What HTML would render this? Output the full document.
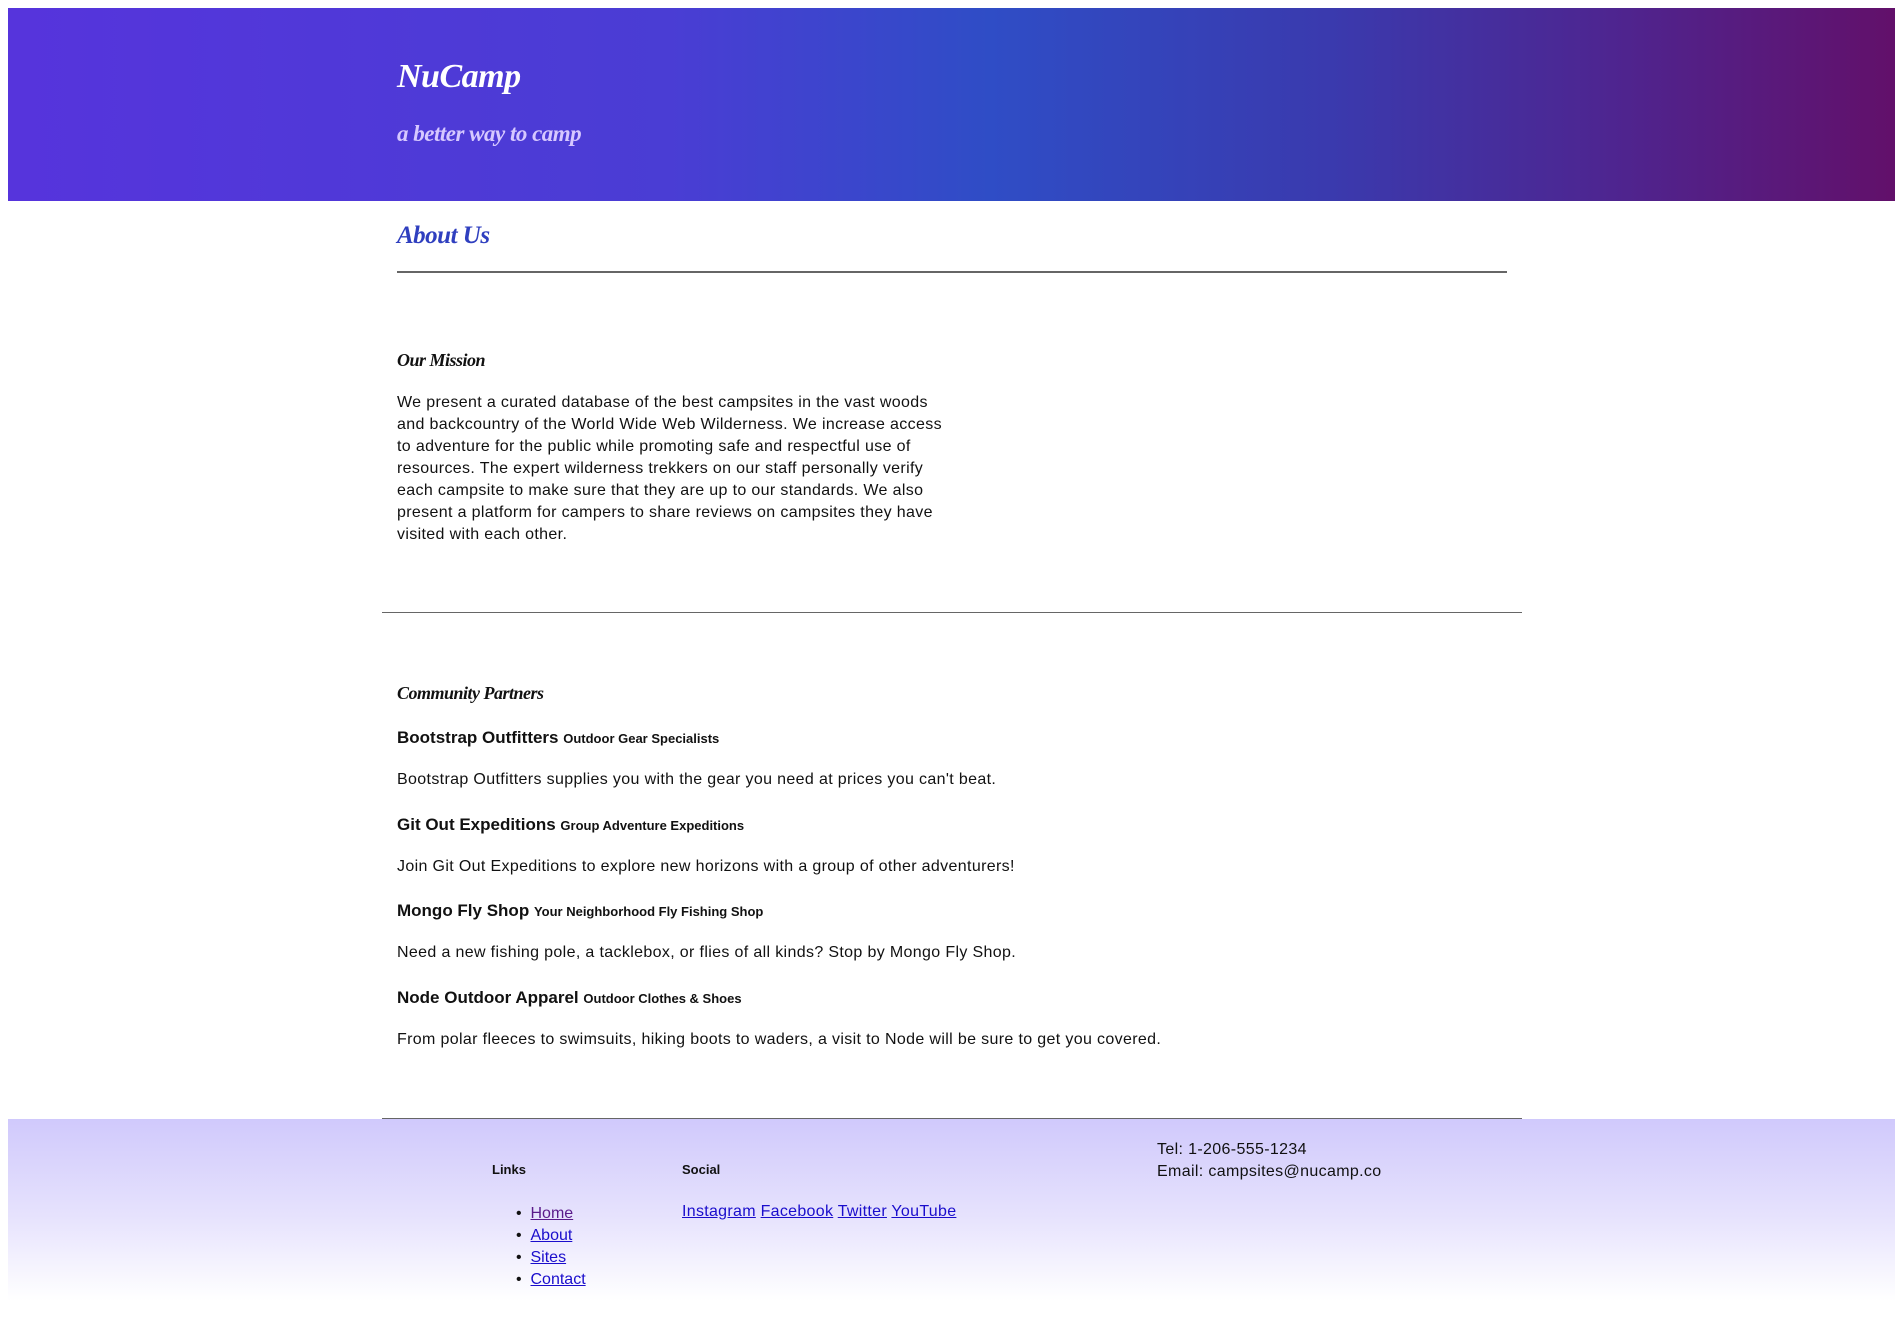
<!DOCTYPE html>
<html><head><meta charset="utf-8"><style>
*{margin:0;padding:0}
body{width:1903px;height:1333px;position:relative;background:#fff;font-family:"Liberation Sans",sans-serif;color:#111;font-size:16px;letter-spacing:0.35px;overflow:hidden}
.a{position:absolute;white-space:nowrap}
.cur{font-family:"Liberation Serif",serif;font-style:italic;font-weight:bold;letter-spacing:-0.5px}
.hr{position:absolute;height:1px;background:#666}
a{color:#1a0dcc;text-decoration:underline}
</style></head><body>
<div class="a" style="left:8px;top:8px;width:1887px;height:193px;background:linear-gradient(90deg,#5634dc 0%,#4a3dd4 35%,#2f4dc6 52%,#3a3aae 70%,#4e2590 85%,#62106a 100%)"></div>
<div class="a cur" style="left:397px;top:58px;font-size:34px;color:#fff">NuCamp</div>
<div class="a cur" style="left:397px;top:121px;font-size:23px;color:#d6c8ff">a better way to camp</div>
<div class="a cur" style="left:397px;top:222px;font-size:25px;color:#2f3fbf">About Us</div>
<div class="hr" style="left:397px;top:271px;width:1110px;height:2px"></div>
<div class="a cur" style="left:397px;top:350px;font-size:18px">Our Mission</div>
<div class="a" style="left:397px;top:392px;line-height:22px;font-size:16px">We present a curated database of the best campsites in the vast woods<br>and backcountry of the World Wide Web Wilderness. We increase access<br>to adventure for the public while promoting safe and respectful use of<br>resources. The expert wilderness trekkers on our staff personally verify<br>each campsite to make sure that they are up to our standards. We also<br>present a platform for campers to share reviews on campsites they have<br>visited with each other.</div>
<div class="hr" style="left:382px;top:612px;width:1140px"></div>
<div class="a cur" style="left:397px;top:683px;font-size:18px">Community Partners</div>
<div class="a" style="left:397px;top:728px;font-size:17px;letter-spacing:0"><b style="font-weight:600">Bootstrap Outfitters</b> <b style="font-size:13px">Outdoor Gear Specialists</b></div>
<div class="a" style="left:397px;top:771px">Bootstrap Outfitters supplies you with the gear you need at prices you can't beat.</div>
<div class="a" style="left:397px;top:815px;font-size:17px;letter-spacing:0"><b style="font-weight:600">Git Out Expeditions</b> <b style="font-size:13px">Group Adventure Expeditions</b></div>
<div class="a" style="left:397px;top:858px">Join Git Out Expeditions to explore new horizons with a group of other adventurers!</div>
<div class="a" style="left:397px;top:901px;font-size:17px;letter-spacing:0"><b style="font-weight:600">Mongo Fly Shop</b> <b style="font-size:13px">Your Neighborhood Fly Fishing Shop</b></div>
<div class="a" style="left:397px;top:944px">Need a new fishing pole, a tacklebox, or flies of all kinds? Stop by Mongo Fly Shop.</div>
<div class="a" style="left:397px;top:988px;font-size:17px;letter-spacing:0"><b style="font-weight:600">Node Outdoor Apparel</b> <b style="font-size:13px">Outdoor Clothes &amp; Shoes</b></div>
<div class="a" style="left:397px;top:1031px">From polar fleeces to swimsuits, hiking boots to waders, a visit to Node will be sure to get you covered.</div>
<div class="a" style="left:8px;top:1119px;width:1887px;height:214px;background:linear-gradient(180deg,#d0c9fc 0%,#e6e2fd 45%,#fff 85%)"></div>
<div class="hr" style="left:382px;top:1118px;width:1140px"></div>
<div class="a" style="left:492px;top:1162px;font-size:13px;font-weight:bold;letter-spacing:0">Links</div>
<div class="a" style="left:682px;top:1162px;font-size:13px;font-weight:bold;letter-spacing:0">Social</div>
<div class="a" style="left:516px;top:1203px;line-height:22px;letter-spacing:0">&bull;&nbsp;&nbsp;<a style="color:#5a1a8a">Home</a><br>&bull;&nbsp;&nbsp;<a>About</a><br>&bull;&nbsp;&nbsp;<a>Sites</a><br>&bull;&nbsp;&nbsp;<a>Contact</a></div>
<div class="a" style="left:682px;top:1203px;letter-spacing:0.3px"><a>Instagram</a> <a>Facebook</a> <a>Twitter</a> <a>YouTube</a></div>
<div class="a" style="left:1157px;top:1139px;line-height:22px">Tel: 1-206-555-1234<br>Email: campsites@nucamp.co</div>
</body></html>
